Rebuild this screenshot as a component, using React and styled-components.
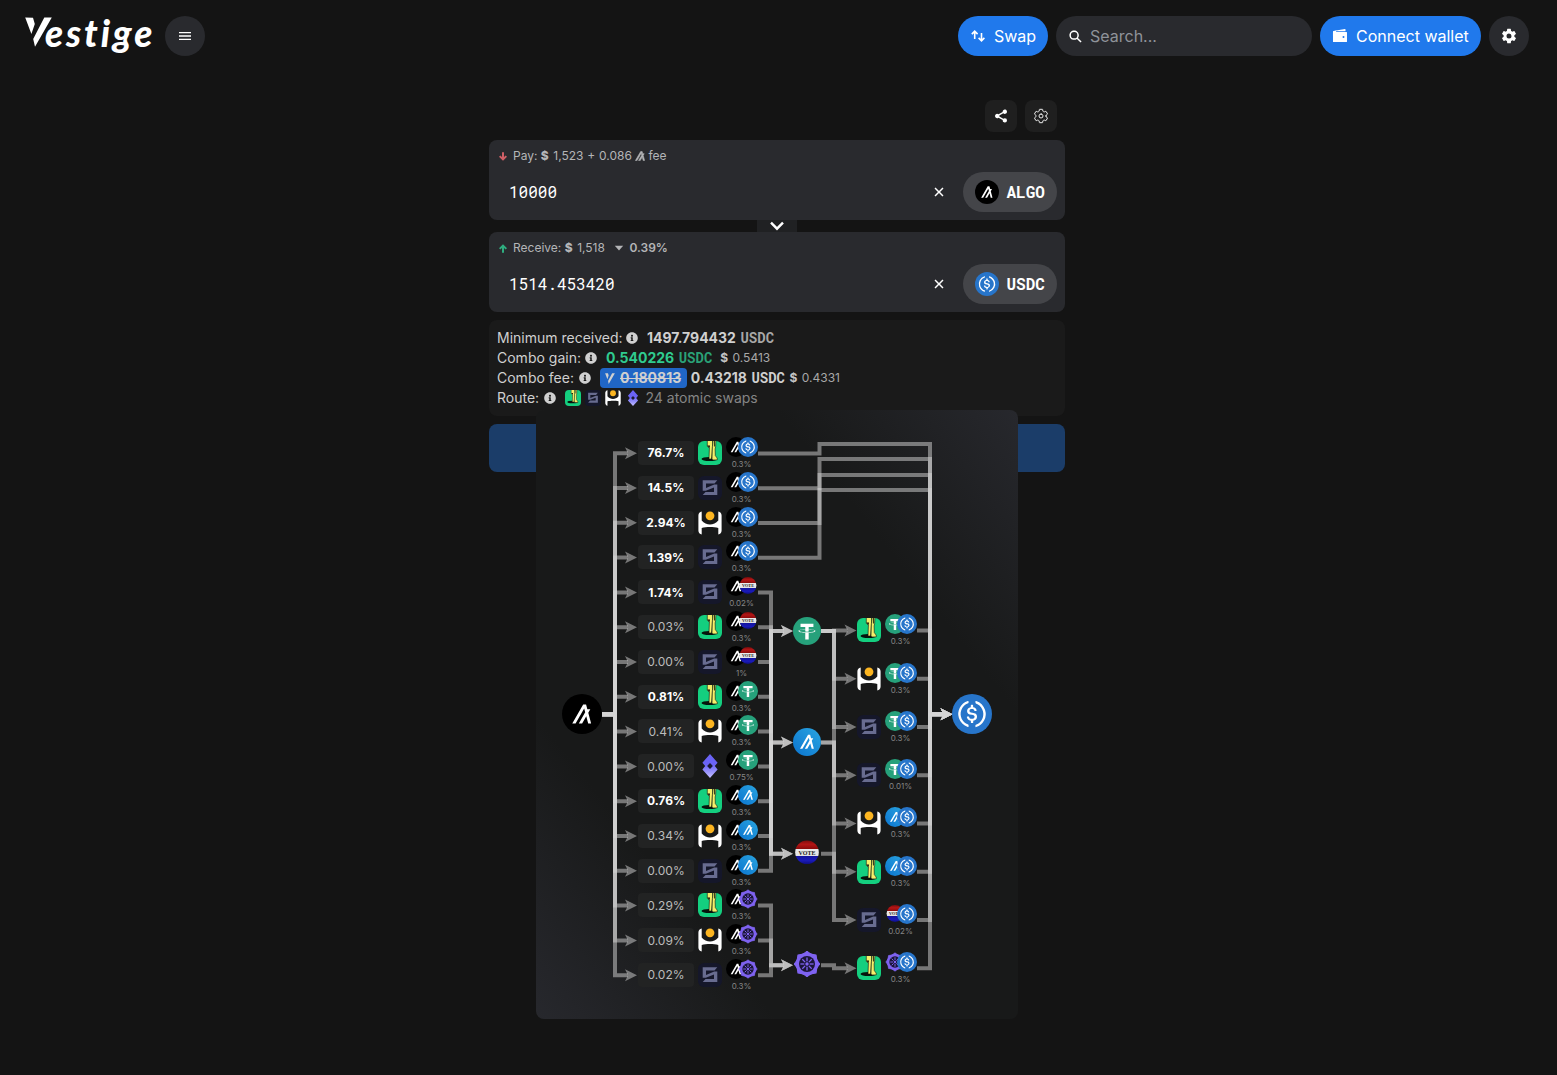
import React from "react";
import styled, { createGlobalStyle, css } from "styled-components";
import {
  IoSearchSharp,
  IoWalletSharp,
  IoSettingsSharp,
  IoSettingsOutline,
  IoShareSocialSharp,
  IoCloseSharp,
} from "react-icons/io5";
import { FaInfoCircle } from "react-icons/fa";

const GlobalStyle = createGlobalStyle`
  * { box-sizing: border-box; }
  body {
    margin: 0;
    background: #141414;
    color: #fff;
    font-family: Inter, "Liberation Sans", sans-serif;
    font-size: 14px;
  }
  svg { display: block; flex: none; }
`;

const mono = css`
  font-family: "Roboto Mono", Roboto, "DejaVu Sans Mono", monospace;
`;

/* ---------- page shell ---------- */

const Page = styled.div`
  min-height: 1075px;
  overflow: hidden;
`;

const Header = styled.header`
  display: flex;
  align-items: center;
  height: 72px;
  padding: 0 28px 0 25px;
`;

const Brand = styled.div`
  display: flex;
  align-items: flex-start;
  width: 140px;
  height: 40px;
  padding-top: 1px;
`;

const BrandWord = styled.span`
  font: italic 900 37px/40px Lato, sans-serif;
  letter-spacing: 2.9px;
  margin: -4px 0 0 -7px;
`;

const Spacer = styled.div`
  flex: 1;
`;

const Actions = styled.div`
  display: flex;
  gap: 8px;
`;

const RoundButton = styled.button`
  display: flex;
  align-items: center;
  justify-content: center;
  width: 40px;
  height: 40px;
  padding: 0;
  border: 0;
  border-radius: 20px;
  background: #292a2e;
  color: #fff;
`;

const PillButton = styled.button`
  display: flex;
  align-items: center;
  gap: 8px;
  width: ${(p) => p.$width}px;
  height: 40px;
  padding: 0 12px;
  border: 0;
  border-radius: 20px;
  background: #2079ec;
  color: #fff;
  font: 400 16px/24px Inter, sans-serif;
  white-space: nowrap;
`;

const SearchBox = styled.label`
  display: flex;
  align-items: center;
  gap: 7px;
  width: 256px;
  height: 40px;
  padding: 0 12px;
  border-radius: 20px;
  background: #292a2e;
  color: #8f939a;
  font-size: 16px;
  svg { color: #fff; }
`;

/* ---------- swap form ---------- */

const Main = styled.main`
  width: 576px;
  margin: 28px 0 0 489px;
`;

const Tools = styled.div`
  display: flex;
  justify-content: flex-end;
  gap: 8px;
  padding-right: 8px;
  margin-bottom: 8px;
`;

const ToolButton = styled.button`
  display: flex;
  align-items: center;
  justify-content: center;
  width: 32px;
  height: 32px;
  padding: 0;
  border: 0;
  border-radius: 8px;
  background: #1f1f1f;
  color: ${(p) => p.$color || "#fff"};
`;

const AmountCard = styled.section`
  height: 80px;
  padding: 8px;
  border-radius: 8px;
  background: #292a2e;
`;

const AmountMeta = styled.div`
  display: flex;
  align-items: center;
  height: 16px;
  padding-left: 2px;
  font-size: 12px;
  line-height: 16px;
  color: #b4b5b7;
  white-space: pre;
`;

const MetaIcon = styled.span`
  width: 14px;
`;

const Dollar = styled.b`
  font-weight: 800;
  margin-right: 4.6px;
`;

const FeeAmount = styled.span`
  word-spacing: 0.4px;
`;

const GlyphGap = styled.span`
  margin: 0 3px 0 3.6px;
`;

const Delta = styled.b`
  display: flex;
  align-items: center;
  gap: 5.500px;
  margin-left: 9px;
  font-weight: 600;
`;

const AmountRow = styled.div`
  display: flex;
  align-items: center;
  height: 40px;
  margin-top: 8px;
  padding-left: 12px;
`;

const Amount = styled.span`
  ${mono}
  flex: 1;
  font-size: 16px;
  line-height: 24px;
`;

const TokenButton = styled.button`
  ${mono}
  display: flex;
  align-items: center;
  gap: 7.500px;
  width: 94px;
  height: 40px;
  margin-left: 16px;
  padding: 0 12px;
  border: 0;
  border-radius: 20px;
  background: #444549;
  color: #fff;
  font-size: 16px;
  font-weight: 700;
  line-height: 24px;
`;

const Divider = styled.div`
  display: flex;
  justify-content: center;
  height: 12px;
`;

const FlipTab = styled.button`
  display: flex;
  align-items: center;
  justify-content: center;
  width: 40px;
  height: 12px;
  padding: 0;
  border: 0;
  background: #202123;
  color: #fff;
`;

const Summary = styled.section`
  height: 96px;
  margin-top: 8px;
  padding: 8px;
  border-radius: 8px;
  background: #1a1a1a;
`;

const SummaryRow = styled.div`
  display: flex;
  align-items: center;
  height: 20px;
  font-size: 14px;
  line-height: 20px;
  color: #d0d0d0;
  white-space: nowrap;
`;

const Label = styled.span`
  width: ${(p) => p.$width}px;
`;

const InfoDot = styled.span`
  display: inline-flex;
  margin: 0 9px 0 4px;
`;

const Value = styled.b`
  font-weight: 700;
  color: ${(p) => p.$color || "#d0d0d0"};
  text-decoration: ${(p) => (p.$struck ? "line-through" : "none")};
`;

const Unit = styled.b`
  ${mono}
  width: 34px;
  margin-left: 4.500px;
  font-weight: 700;
  color: ${(p) => p.$color || "#a8a8a8"};
`;

const Fiat = styled.span`
  margin-left: ${(p) => p.$gap}px;
  font-size: 12px;
  color: #a8a8a8;
  b { color: #c4c4c4; margin-right: 4.500px; }
`;

const FeeBadge = styled.span`
  display: flex;
  align-items: center;
  gap: 5px;
  height: 20px;
  margin-right: 4px;
  padding: 0 5.5px 0 5px;
  border-radius: 4px;
  background: #2066c6;
`;

const RouteIcons = styled.span`
  display: flex;
  gap: 4px;
  margin-right: 4.500px;
`;

const Muted = styled.span`
  color: #858585;
`;

const SubmitButton = styled.button`
  display: block;
  width: 100%;
  height: 48px;
  margin-top: 8px;
  border: 0;
  border-radius: 8px;
  background: #1b3d69;
`;

/* ---------- route popover ---------- */

const Popover = styled.aside`
  position: absolute;
  left: 536px;
  top: 410px;
  display: flex;
  width: 482px;
  height: 609px;
  border-radius: 8px;
  background: linear-gradient(to top right, #27282d 0%, #181919 25%, #181919 75%, #27282d 100%);
`;

const Wires = styled.svg`
  position: absolute;
  inset: 0;
`;

const Column = styled.div`
  position: relative;
  display: flex;
  flex-direction: column;
  padding-top: ${(p) => p.$top}px;
  margin-left: ${(p) => p.$left}px;
`;

const Hop = styled.div`
  display: flex;
  align-items: center;
  gap: 4px;
  height: ${(p) => p.$height}px;
`;

const NodeSlot = styled.div`
  display: flex;
  align-items: center;
  height: ${(p) => p.$height}px;
`;

const Share = styled.span`
  display: flex;
  align-items: center;
  justify-content: center;
  width: 56px;
  height: 24px;
  border-radius: 4px;
  background: #222323;
  font-size: 12px;
  font-weight: ${(p) => (p.$strong ? 700 : 400)};
  color: ${(p) => (p.$strong ? "#fff" : "#bcbcbc")};
`;

const PairBox = styled.span`
  display: flex;
  flex-direction: column;
  align-items: center;
  width: 32px;
`;

const PairCoins = styled.span`
  display: flex;
  svg + svg { margin-left: -8px; }
`;

const PairFee = styled.span`
  height: 12px;
  margin-left: -1px;
  font-size: 8px;
  line-height: 14px;
  color: #858585;
`;

/* ---------- drawings ---------- */

const ALGO_PATH =
  "M23.98 23.99h-3.75l-2.44-9.07-5.25 9.07H8.34l8.1-14.04-1.3-4.88L4.22 24H.02L13.88 0h3.67l1.61 5.96h3.79l-2.59 4.5 3.62 13.53z";

const VestigeMark = ({ width, height, color }) => (
  <svg width={width} height={height} viewBox="0 0 27 30" fill={color} aria-hidden>
    <path d="M.2.5 8 .8 9.8 7 6.4 17zM19.300.5h7.500L10 29.800 8.200 22z" />
  </svg>
);

const MenuLines = () => (
  <svg width="16" height="16" viewBox="0 0 16 16" fill="#fff">
    <path d="M2 3.900h12v1.400H2zM2 7.300h12v1.400H2zM2 10.700h12v1.400H2z" />
  </svg>
);

const SwapArrows = () => (
  <svg width="16" height="16" viewBox="0 0 16 16" fill="none" stroke="#fff" strokeWidth="1.600">
    <path d="M4.700 11V3.400M1.800 6.100l2.900-2.900 2.900 2.900M11.500 5v7.600M8.600 9.900l2.900 2.900 2.900-2.900" />
  </svg>
);

const AlgoGlyph = ({ size, color = "currentColor" }) => (
  <svg width={size} height={size} viewBox="-1 -1 26 26" fill={color} stroke={color} strokeWidth="1.400">
    <path d={ALGO_PATH} />
  </svg>
);

const Algo = ({ size, inPair }) => (
  <svg width={size} height={size} viewBox="0 0 32 32">
    <circle cx="16" cy="16" r="16" fill="#000" />
    <path d={ALGO_PATH} fill="#fff" transform={inPair ? "translate(7.500 7.500) scale(.7)" : "translate(8.200 8.400) scale(.63)"} />
  </svg>
);

const GAlgo = ({ size }) => (
  <svg width={size} height={size} viewBox="0 0 32 32">
    <linearGradient id="galgo" x1="1" y1="0" x2="0" y2="1">
      <stop offset="0" stopColor="#2aa5e0" />
      <stop offset="1" stopColor="#0b74cf" />
    </linearGradient>
    <circle cx="16" cy="16" r="16" fill="url(#galgo)" />
    <path d={ALGO_PATH} fill="#fff" transform="translate(8 7.800) scale(.66)" />
  </svg>
);

const Usdc = ({ size }) => (
  <svg width={size} height={size} viewBox="0 0 32 32">
    <circle cx="16" cy="16" r="16" fill="#2775ca" />
    <g fill="#fff">
      <path d="M20.022 18.124c0-2.124-1.28-2.852-3.84-3.156-1.828-.243-2.193-.728-2.193-1.578 0-.85.61-1.396 1.828-1.396 1.097 0 1.707.364 2.011 1.275a.458.458 0 00.427.303h.975a.416.416 0 00.427-.425v-.06a3.04 3.04 0 00-2.743-2.489V9.142c0-.243-.183-.425-.487-.486h-.915c-.243 0-.426.182-.487.486v1.396c-1.829.242-2.986 1.456-2.986 2.974 0 2.002 1.218 2.791 3.778 3.095 1.707.303 2.255.668 2.255 1.639 0 .97-.853 1.638-2.011 1.638-1.585 0-2.133-.667-2.316-1.578-.06-.242-.244-.364-.427-.364h-1.036a.416.416 0 00-.426.425v.06c.243 1.518 1.219 2.61 3.23 2.914v1.457c0 .242.183.425.487.485h.915c.243 0 .426-.182.487-.485V21.34c1.829-.303 3.047-1.578 3.047-3.217z" />
      <path d="M12.892 24.497c-4.754-1.7-7.192-6.98-5.424-11.653.914-2.55 2.925-4.491 5.424-5.402.244-.121.365-.303.365-.607v-.85c0-.242-.121-.424-.365-.485-.061 0-.183 0-.244.06a10.895 10.895 0 00-7.13 13.717c1.096 3.4 3.717 6.01 7.13 7.102.244.121.488 0 .548-.243.061-.06.061-.122.061-.243v-.85c0-.182-.182-.424-.365-.546zm6.46-18.936c-.244-.122-.488 0-.548.242-.061.061-.061.122-.061.243v.85c0 .243.182.485.365.607 4.754 1.7 7.192 6.98 5.424 11.653-.914 2.55-2.925 4.491-5.424 5.402-.244.121-.365.303-.365.607v.85c0 .242.121.424.365.485.061 0 .183 0 .244-.06a10.895 10.895 0 007.13-13.717c-1.096-3.46-3.778-6.07-7.13-7.162z" />
    </g>
  </svg>
);

const Usdt = ({ size }) => (
  <svg width={size} height={size} viewBox="0 0 32 32">
    <circle cx="16" cy="16" r="16" fill="#26a17b" />
    <path
      fill="#fff"
      d="M17.922 17.383v-.002c-.11.008-.677.042-1.942.042-1.01 0-1.721-.03-1.971-.042v.003c-3.888-.171-6.79-.848-6.79-1.658 0-.809 2.902-1.486 6.79-1.66v2.644c.254.018.982.061 1.988.061 1.207 0 1.812-.05 1.925-.06v-2.643c3.88.173 6.775.85 6.775 1.658 0 .81-2.895 1.485-6.775 1.657m0-3.59v-2.366h5.414V7.819H8.595v3.608h5.414v2.365c-4.4.202-7.709 1.074-7.709 2.118 0 1.044 3.309 1.915 7.709 2.118v7.582h3.913v-7.584c4.393-.202 7.694-1.073 7.694-2.116 0-1.043-3.301-1.914-7.694-2.117"
    />
  </svg>
);

const Vote = ({ size }) => (
  <svg width={size} height={size} viewBox="0 0 28 28">
    <defs>
      <linearGradient id="voteFill" x1="0" y1="0" x2="0" y2="1">
        <stop offset="0" stopColor="#7d0c0c" />
        <stop offset=".16" stopColor="#b41616" />
        <stop offset=".34" stopColor="#8e0c0c" />
        <stop offset=".35" stopColor="#ececec" />
        <stop offset=".66" stopColor="#e2e2e2" />
        <stop offset=".67" stopColor="#1414a0" />
        <stop offset=".85" stopColor="#1a1ab8" />
        <stop offset="1" stopColor="#0e0e80" />
      </linearGradient>
    </defs>
    <circle cx="14" cy="13.300" r="11.800" fill="url(#voteFill)" />
    <text x="14" y="15.500" textAnchor="middle" fontFamily="Liberation Serif, serif" fontWeight="700" fontSize="6" fill="#222">
      VOTE
    </text>
  </svg>
);

const SPOKES = [0, 45, 90, 135, 180, 225, 270, 315];

const Cog = ({ size }) => (
  <svg width={size} height={size} viewBox="0 0 28 28">
    <g fill="#7f63f1">
      <circle cx="14" cy="14" r="11.200" />
      {SPOKES.map((a) => (
        <path key={a} d="M14 1.200 18.600 4.600H9.400z" stroke="#7f63f1" strokeWidth="1" strokeLinejoin="round" transform={`rotate(${a} 14 14)`} />
      ))}
    </g>
    <circle cx="14" cy="14" r="8" fill="#1b1638" />
    {SPOKES.map((a) => (
      <path key={a} d="M14 11.300V7.400" stroke="#7f63f1" strokeWidth="1.300" transform={`rotate(${a} 14 14)`} />
    ))}
    <circle cx="14" cy="14" r="1.700" fill="#7f63f1" />
  </svg>
);

const Humble = ({ size }) => (
  <svg width={size} height={size} viewBox="0 0 24 24">
    <rect width="24" height="24" rx="6" fill="#14cf7f" />
    <ellipse cx="11.400" cy="18" rx="7.900" ry="2" fill="#06130c" />
    <g fill="#f4ef6b" stroke="#0b130c" strokeWidth=".6">
      <path d="M9.300-1h5.200v6.400l-.9 12.600h-2.600l.4-10.800-2.100-1.900z" />
      <path d="M15-1h2.900l-.3 6.600-.5 2.400.2 6.600 1.900 2.500v1.800h-4.300l-.9-.9.4-12.200z" />
    </g>
    <path d="M9.300 4.400h2.700L11.500 7.200z" fill="#0b130c" />
    <path d="M15.900 0h.9v5.400h-.9z" fill="#0b130c" />
  </svg>
);

const Tinyman = ({ size }) => (
  <svg width={size} height={size} viewBox="0 0 24 24">
    <rect width="24" height="24" rx="6" fill="#15172a" />
    <path
      fill="#686c90"
      d="M4.700 4.300H19.300L16.500 7.500H8V11.900L16.200 8.600H19.300V19.100H4.700L7.500 15.900H16V11.500L7.800 14.800H4.700z"
    />
  </svg>
);

const Pact = ({ size }) => (
  <svg width={size} height={size} viewBox="0 0 24 24">
    <path
      fill="#fff"
      d="M.4 4.600C.4 2.400 1.800.9 3.700.5V9.400c2.200 2.900 5.300 4 8.300 4s6.100-1.100 8.300-4V.5c1.900.4 3.300 1.900 3.300 4.100v14.800c0 2.200-1.400 3.700-3.300 4.100V17c-2.100-.8-5.500-1-8.300-1s-6.200.2-8.300 1v6.500C1.800 23.100.4 21.600.4 19.400z"
    />
    <circle cx="12" cy="4.800" r="4.400" fill="#fcb520" />
  </svg>
);

const Prism = ({ size }) => (
  <svg width={size} height={size} viewBox="0 0 24 24">
    <linearGradient id="prism" x1="0" y1="0" x2="0" y2="1">
      <stop offset=".45" stopColor="#6a63f6" />
      <stop offset="1" stopColor="#c3bfff" />
    </linearGradient>
    <path d="M12 0 19.600 8.800 16.800 12l2.800 3.600L12 24 4.400 15.600 7.200 12 4.400 8.800z" fill="url(#prism)" />
    <path d="M12 9 14.900 12 12 15 9.100 12z" fill="#1b1a33" />
  </svg>
);

const TrendArrow = ({ up }) => (
  <svg width="8" height="9" viewBox="0 0 8 9" fill="none" stroke={up ? "#2fae80" : "#cf5f66"} strokeWidth="2">
    <path d={up ? "M4 8.700V1.600M.7 4.900 4 1.600l3.300 3.300" : "M4 .3v7.100M.7 4.100 4 7.400l3.300-3.300"} />
  </svg>
);

const CaretDown = () => (
  <svg width="10" height="10" viewBox="0 0 10 10" fill="currentColor">
    <path d="M.8 2.800h8.400L5 7.600z" />
  </svg>
);

const Chevron = () => (
  <svg width="14" height="10" viewBox="0 0 14 10" fill="none" stroke="#fff" strokeWidth="2.400">
    <path d="M1 1.700 7 7.700l6-6" />
  </svg>
);

/* ---------- data ---------- */

const DEX = { humble: Humble, tinyman: Tinyman, pact: Pact, prism: Prism };
const COIN = { algo: Algo, usdc: Usdc, usdt: Usdt, vote: Vote, galgo: GAlgo, cog: Cog };

const FIRST = [
  ["76.7%", "humble", "usdc", "0.3%"],
  ["14.5%", "tinyman", "usdc", "0.3%"],
  ["2.94%", "pact", "usdc", "0.3%"],
  ["1.39%", "tinyman", "usdc", "0.3%"],
  ["1.74%", "tinyman", "vote", "0.02%"],
  ["0.03%", "humble", "vote", "0.3%"],
  ["0.00%", "tinyman", "vote", "1%"],
  ["0.81%", "humble", "usdt", "0.3%"],
  ["0.41%", "pact", "usdt", "0.3%"],
  ["0.00%", "prism", "usdt", "0.75%"],
  ["0.76%", "humble", "galgo", "0.3%"],
  ["0.34%", "pact", "galgo", "0.3%"],
  ["0.00%", "tinyman", "galgo", "0.3%"],
  ["0.29%", "humble", "cog", "0.3%"],
  ["0.09%", "pact", "cog", "0.3%"],
  ["0.02%", "tinyman", "cog", "0.3%"],
];

const MIDDLE = ["usdt", "galgo", "vote", "cog"];

const SECOND = [
  ["humble", "usdt", "0.3%"],
  ["pact", "usdt", "0.3%"],
  ["tinyman", "usdt", "0.3%"],
  ["tinyman", "usdt", "0.01%"],
  ["pact", "galgo", "0.3%"],
  ["humble", "galgo", "0.3%"],
  ["tinyman", "vote", "0.02%"],
  ["humble", "cog", "0.3%"],
];

const FIRST_STEP = 34.8;
const MIDDLE_STEP = 111.4;
const SECOND_STEP = 48.25;
const firstY = (i) => 43.2 + i * FIRST_STEP;
const middleY = (i) => 221 + i * MIDDLE_STEP;
const secondY = (i) => 220.5 + i * SECOND_STEP;
const HUB_Y = 304.2;
const BYPASS_Y = [34, 49, 65, 80];

/* ---------- pieces ---------- */

const Wire = ({ points, arrow }) => {
  const [x, y] = points[points.length - 1];
  return (
    <>
      <polyline
        points={(arrow ? [...points.slice(0, -1), [x - 9, y]] : points).map((p) => p.join(",")).join(" ")}
        fill="none"
        stroke="#d6d6d6"
        strokeWidth="4"
        strokeOpacity=".5"
      />
      {arrow && <path d={`M${x - 12} ${y - 6}L${x} ${y}L${x - 12} ${y + 6}L${x - 9} ${y}z`} fill="#d6d6d6" fillOpacity=".5" />}
    </>
  );
};

const RouteWires = () => (
  <Wires width="482" height="609" viewBox="0 0 482 609">
    {FIRST.map((row, i) => {
      const y = firstY(i);
      const target = MIDDLE.indexOf(row[2]);
      return (
        <g key={i}>
          <Wire arrow points={[[66, HUB_Y], [79, HUB_Y], [79, y], [101, y]]} />
          {i < 4 ? (
            <Wire arrow points={[[222, y + 0.2], [283.5, y + 0.2], [283.5, BYPASS_Y[i]], [394, BYPASS_Y[i]], [394, HUB_Y], [416.5, HUB_Y]]} />
          ) : (
            <Wire arrow points={[[222, y], [235, y], [235, middleY(target)], [257, middleY(target)]]} />
          )}
        </g>
      );
    })}
    {SECOND.map((row, i) => {
      const y = secondY(i);
      const from = middleY(MIDDLE.indexOf(row[1]));
      return (
        <g key={i}>
          <Wire arrow points={[[285, from], [298, from], [298, y], [320.5, y]]} />
          <Wire arrow points={[[381, y], [394, y], [394, HUB_Y], [416.5, HUB_Y]]} />
        </g>
      );
    })}
  </Wires>
);

const Pair = ({ a, b, fee }) => {
  const A = COIN[a];
  const B = COIN[b];
  return (
    <PairBox>
      <PairCoins>
        <A size={20} inPair />
        <B size={20} inPair />
      </PairCoins>
      <PairFee>{fee}</PairFee>
    </PairBox>
  );
};

const DexIcon = ({ name, size = 24 }) => {
  const Icon = DEX[name];
  return <Icon size={size} />;
};

const Info = () => (
  <InfoDot>
    <FaInfoCircle size={12} />
  </InfoDot>
);

const RoutePopover = () => (
  <Popover>
    <RouteWires />
    <Column $left={26} $top={284}>
      <Algo size={40} />
    </Column>
    <Column $left={36} $top={43 - FIRST_STEP / 2}>
      {FIRST.map(([share, dex, coin, fee], i) => (
        <Hop key={i} $height={FIRST_STEP}>
          <Share $strong={parseFloat(share) > 0.5}>{share}</Share>
          <DexIcon name={dex} />
          <Pair a="algo" b={coin} fee={fee} />
        </Hop>
      ))}
    </Column>
    <Column $left={35} $top={221 - MIDDLE_STEP / 2}>
      {MIDDLE.map((coin) => {
        const Coin = COIN[coin];
        return (
          <NodeSlot key={coin} $height={MIDDLE_STEP}>
            <Coin size={28} />
          </NodeSlot>
        );
      })}
    </Column>
    <Column $left={36} $top={220.4 - SECOND_STEP / 2}>
      {SECOND.map(([dex, coin, fee], i) => (
        <Hop key={i} $height={SECOND_STEP}>
          <DexIcon name={dex} />
          <Pair a={coin} b="usdc" fee={fee} />
        </Hop>
      ))}
    </Column>
    <Column $left={35} $top={284}>
      <Usdc size={40} />
    </Column>
  </Popover>
);

export default function App() {
  return (
    <Page>
      <GlobalStyle />
      <Header>
        <Brand>
          <VestigeMark width={27} height={30} color="#fff" />
          <BrandWord>estige</BrandWord>
        </Brand>
        <RoundButton>
          <MenuLines />
        </RoundButton>
        <Spacer />
        <Actions>
          <PillButton $width={90}>
            <SwapArrows />
            Swap
          </PillButton>
          <SearchBox>
            <IoSearchSharp size={15} />
            Search...
          </SearchBox>
          <PillButton $width={161}>
            <IoWalletSharp size={16} />
            Connect wallet
          </PillButton>
          <RoundButton>
            <IoSettingsSharp size={16} />
          </RoundButton>
        </Actions>
      </Header>

      <Main>
        <Tools>
          <ToolButton>
            <IoShareSocialSharp size={16} />
          </ToolButton>
          <ToolButton $color="#f0f0f0">
            <IoSettingsOutline size={16} />
          </ToolButton>
        </Tools>

        <AmountCard>
          <AmountMeta>
            <MetaIcon>
              <TrendArrow />
            </MetaIcon>
            {"Pay: "}
            <Dollar>$</Dollar>
            <FeeAmount>1,523 + 0.086</FeeAmount>
            <GlyphGap>
              <AlgoGlyph size={10} />
            </GlyphGap>
            fee
          </AmountMeta>
          <AmountRow>
            <Amount>10000</Amount>
            <IoCloseSharp size={16} />
            <TokenButton>
              <Algo size={24} />
              ALGO
            </TokenButton>
          </AmountRow>
        </AmountCard>
        <Divider>
          <FlipTab>
            <Chevron />
          </FlipTab>
        </Divider>
        <AmountCard>
          <AmountMeta>
            <MetaIcon>
              <TrendArrow up />
            </MetaIcon>
            {"Receive: "}
            <Dollar>$</Dollar>
            1,518
            <Delta>
              <CaretDown />
              0.39%
            </Delta>
          </AmountMeta>
          <AmountRow>
            <Amount>1514.453420</Amount>
            <IoCloseSharp size={16} />
            <TokenButton>
              <Usdc size={24} />
              USDC
            </TokenButton>
          </AmountRow>
        </AmountCard>

        <Summary>
          <SummaryRow>
            <Label $width={125}>Minimum received:</Label>
            <Info />
            <Value>1497.794432</Value>
            <Unit>USDC</Unit>
          </SummaryRow>
          <SummaryRow>
            <Label $width={84}>Combo gain:</Label>
            <Info />
            <Value $color="#2fcb8f">0.540226</Value>
            <Unit $color="#2aa277">USDC</Unit>
            <Fiat $gap={7.5}>
              <b>$</b>0.5413
            </Fiat>
          </SummaryRow>
          <SummaryRow>
            <Label $width={78}>Combo fee:</Label>
            <Info />
            <FeeBadge>
              <VestigeMark width={10} height={11} color="#d0d0d0" />
              <Value $struck>0.180813</Value>
            </FeeBadge>
            <Value>0.43218</Value>
            <Unit $color="#d0d0d0">USDC</Unit>
            <Fiat $gap={4}>
              <b>$</b>0.4331
            </Fiat>
          </SummaryRow>
          <SummaryRow>
            <Label $width={43}>Route:</Label>
            <Info />
            <RouteIcons>
              <DexIcon name="humble" size={16} />
              <DexIcon name="tinyman" size={16} />
              <DexIcon name="pact" size={16} />
              <DexIcon name="prism" size={16} />
            </RouteIcons>
            <Muted>24 atomic swaps</Muted>
          </SummaryRow>
        </Summary>
        <SubmitButton aria-label="Swap" />
      </Main>
      <RoutePopover />
    </Page>
  );
}
